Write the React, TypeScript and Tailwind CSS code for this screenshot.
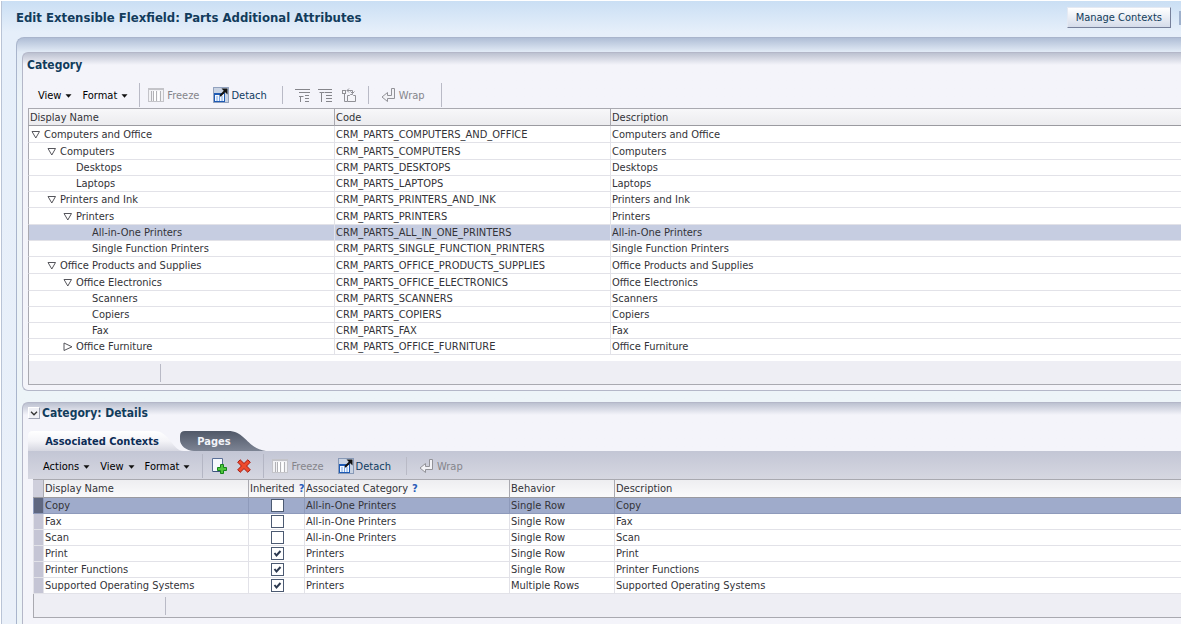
import React from "react";

type TreeRow = {
  name: string;
  code: string;
  level: number;
  state?: "open" | "closed";
  tall?: boolean;
  selected?: boolean;
};

const treeRows: TreeRow[] = [
  { name: "Computers and Office", code: "CRM_PARTS_COMPUTERS_AND_OFFICE", level: 0, state: "open", tall: true },
  { name: "Computers", code: "CRM_PARTS_COMPUTERS", level: 1, state: "open", tall: true },
  { name: "Desktops", code: "CRM_PARTS_DESKTOPS", level: 2 },
  { name: "Laptops", code: "CRM_PARTS_LAPTOPS", level: 2 },
  { name: "Printers and Ink", code: "CRM_PARTS_PRINTERS_AND_INK", level: 1, state: "open" },
  { name: "Printers", code: "CRM_PARTS_PRINTERS", level: 2, state: "open", tall: true },
  { name: "All-in-One Printers", code: "CRM_PARTS_ALL_IN_ONE_PRINTERS", level: 3, selected: true },
  { name: "Single Function Printers", code: "CRM_PARTS_SINGLE_FUNCTION_PRINTERS", level: 3 },
  { name: "Office Products and Supplies", code: "CRM_PARTS_OFFICE_PRODUCTS_SUPPLIES", level: 1, state: "open", tall: true },
  { name: "Office Electronics", code: "CRM_PARTS_OFFICE_ELECTRONICS", level: 2, state: "open", tall: true },
  { name: "Scanners", code: "CRM_PARTS_SCANNERS", level: 3 },
  { name: "Copiers", code: "CRM_PARTS_COPIERS", level: 3 },
  { name: "Fax", code: "CRM_PARTS_FAX", level: 3 },
  { name: "Office Furniture", code: "CRM_PARTS_OFFICE_FURNITURE", level: 2, state: "closed" },
];

const contexts = [
  { name: "Copy", inherited: false, category: "All-in-One Printers", behavior: "Single Row", selected: true },
  { name: "Fax", inherited: false, category: "All-in-One Printers", behavior: "Single Row" },
  { name: "Scan", inherited: false, category: "All-in-One Printers", behavior: "Single Row" },
  { name: "Print", inherited: true, category: "Printers", behavior: "Single Row" },
  { name: "Printer Functions", inherited: true, category: "Printers", behavior: "Single Row" },
  { name: "Supported Operating Systems", inherited: true, category: "Printers", behavior: "Multiple Rows" },
];

const indents = ["pl-[2px]", "pl-[18px]", "pl-[34px]", "pl-[50px]"];

function Caret() {
  return (
    <svg width="7" height="4" viewBox="0 0 7 4" className="mt-0.5">
      <path d="M0.500 0.300h6L3.500 3.800z" fill="#111" />
    </svg>
  );
}

function MenuButton({ label }: { label: string }) {
  return (
    <button type="button" className="flex items-center gap-1 text-black">
      {label}
      <Caret />
    </button>
  );
}

function FreezeIcon() {
  return (
    <svg width="16" height="14" viewBox="0 0 16 14">
      <rect x="0.5" y="0.5" width="15" height="13" fill="#f2f2f5" stroke="#c4c4c9" />
      <path d="M1 1.500h14" stroke="#c4c4c9" />
      <path d="M3.500 3v10M5.500 3v10M8.500 3v10M12.500 3v10" stroke="#b2b2b6" />
      <path d="M7 3v10M10.500 3v10" stroke="#fff" strokeWidth="2" />
    </svg>
  );
}

function DetachIcon() {
  return (
    <svg width="16" height="16" viewBox="0 0 16 16">
      <rect x="0.5" y="0.5" width="15" height="15" fill="#c9d3e3" stroke="#44618e" strokeDasharray="1 1" />
      <rect x="1.500" y="6.500" width="10" height="8" fill="#f3f8ff" stroke="#1d5ab4" />
      <path d="M1 7h8" stroke="#1d5ab4" strokeWidth="2" />
      <path d="M4 9v5M6.500 9v5M9 9v5" stroke="#7aa5e2" />
      <path d="M7 9l5-5" stroke="#111" strokeWidth="2" />
      <path d="M8.500 1.500h6v6z" fill="#111" />
    </svg>
  );
}

function WrapIcon() {
  return (
    <svg width="15" height="15" viewBox="0 0 15 15" fill="#f2f2f6" stroke="#929298">
      <path d="M10.500 0.500h3v10h-7v3L1 9l5.500-4.500v3h4z" />
    </svg>
  );
}

function ExpandBelowIcon() {
  return (
    <svg width="15" height="15" viewBox="0 0 15 15" stroke="#85858b" fill="none">
      <path d="M0 1.500h15M4 4.500h11M10 7.500h4M10 10.500h4M10 13.500h4" />
      <path d="M5.500 14v-5.500h3M4 8.500h4" />
    </svg>
  );
}

function CollapseBelowIcon() {
  return (
    <svg width="15" height="15" viewBox="0 0 15 15" stroke="#85858b" fill="none">
      <path d="M0 1.500h14M3.500 14v-9.500h3M1.500 4.500h2M7 4.500h7M8 7.500h6M8 10.500h6M8 13.500h6" />
    </svg>
  );
}

function ShowAsTopIcon() {
  return (
    <svg width="15" height="15" viewBox="0 0 15 15" stroke="#909096" fill="#f5f5f9">
      <rect x="1.500" y="2.500" width="3" height="3" />
      <path d="M3.500 6v7.500h3" fill="none" />
      <path d="M6.500 7.500h2l1-1h2l1 1h2v6h-8z" />
      <path d="M6 2.500h5.500v3M9.500 3.500l2 2 2-2M8 0.500l-2 2 2 2" fill="none" />
    </svg>
  );
}

function AddIcon() {
  return (
    <svg width="17" height="16" viewBox="0 0 17 16">
      <path d="M1.500 0.500h10v13h-10z" fill="#f5f8fd" stroke="#5a6f97" />
      <path d="M2 13.500h9" stroke="#3d547f" />
      <path d="M9.500 6.500h3v3h3v3h-3v3h-3v-3h-3v-3h3z" fill="#4fc63c" stroke="#15841a" />
    </svg>
  );
}

function DeleteIcon() {
  return (
    <svg width="14" height="14" viewBox="0 0 14 14">
      <path d="M3.200 0.800L7 4.500l3.800-3.700 2.500 2.400L9.600 7l3.700 3.800-2.500 2.500L7 9.600l-3.800 3.700-2.500-2.500L4.400 7 0.700 3.200z" fill="#ee4b2c" stroke="#a8190e" />
    </svg>
  );
}

function Separator() {
  return <span className="h-[18px] w-px bg-[#b9bac6]" />;
}

function ToolButton({ icon, label, disabled }: { icon: React.ReactNode; label: string; disabled?: boolean }) {
  return (
    <button
      type="button"
      disabled={disabled}
      className={disabled ? "flex items-center gap-[3px] text-[#85858b]" : "flex items-center gap-0.5 text-[#0f3b62]"}
    >
      {icon}
      {label}
    </button>
  );
}

function Disclosure({ state, name }: { state?: "open" | "closed"; name: string }) {
  if (!state) return <span className="w-[10px] shrink-0" />;
  return (
    <button type="button" aria-label={`${state === "open" ? "Collapse" : "Expand"} ${name}`} className="w-[10px] shrink-0">
      <svg width="10" height="9" viewBox="0 0 10 9" fill="#fff" stroke="#55555b">
        {state === "open" ? <path d="M1 1.500h7.500L4.800 8z" /> : <path d="M1 1l8 3.800L1 8.500z" />}
      </svg>
    </button>
  );
}

function HelpMark() {
  return (
    <a href="#help" aria-label="Help" className="ml-1 font-bold text-[#2a5cb8]">
      ?
    </a>
  );
}

const headCell = "border-l border-[#a9a9b0] pl-px text-left font-normal whitespace-nowrap overflow-hidden";

function CategoryTable() {
  return (
    <table className="w-full table-fixed border-separate border-spacing-0 bg-white">
      <colgroup>
        <col className="w-[306px]" />
        <col className="w-[276px]" />
        <col />
      </colgroup>
      <thead>
        <tr className="h-[18px] bg-linear-to-b from-[#f8f8fa] to-[#ebebee]">
          {["Display Name", "Code", "Description"].map((h) => (
            <th key={h} className="overflow-hidden border-t border-b border-l border-t-[#a9a9b0] border-b-[#9a9aa0] border-l-[#a9a9b0] p-0 pl-px text-left font-normal">
              {h}
            </th>
          ))}
        </tr>
      </thead>
      <tbody>
        {treeRows.map((r) => (
          <tr key={r.code} className={`${r.tall ? "h-[17px]" : "h-4"} ${r.selected ? "bg-[#c6cde1]" : ""}`}>
            <td className="border-b border-l border-b-[#e2e2e8] border-l-[#a9a9b0] p-0">
              <div className={`flex items-center gap-[3px] ${indents[r.level]}`}>
                <Disclosure state={r.state} name={r.name} />
                <span>{r.name}</span>
              </div>
            </td>
            <td className="border-b border-l border-[#e2e2e8] p-0 pl-px">{r.code}</td>
            <td className="border-b border-l border-[#e2e2e8] p-0 pl-px">{r.name}</td>
          </tr>
        ))}
      </tbody>
    </table>
  );
}

function ContextsTable() {
  return (
    <table className="w-full table-fixed border-separate border-spacing-0 bg-white">
      <colgroup>
        <col className="w-[10px]" />
        <col className="w-[205px]" />
        <col className="w-[56px]" />
        <col className="w-[205px]" />
        <col className="w-[105px]" />
        <col />
      </colgroup>
      <thead>
        <tr className="h-[19px] bg-linear-to-b from-[#ededf0] to-[#fbfbfc] [&>th]:border-t [&>th]:border-b [&>th]:border-t-[#a9a9b0] [&>th]:border-b-[#9a9aa0] [&>th]:p-0 [&>th]:pl-px">
          <th aria-label="Row selector" className="bg-[#cfcfdc]" />
          <th className={headCell}>Display Name</th>
          <th className={headCell}>
            Inherited
            <HelpMark />
          </th>
          <th className={headCell}>
            Associated Category
            <HelpMark />
          </th>
          <th className={headCell}>Behavior</th>
          <th className={headCell}>Description</th>
        </tr>
      </thead>
      <tbody>
        {contexts.map((c) => (
          <tr
            key={c.name}
            className={`h-4 [&>td]:border-b [&>td]:border-l [&>td]:p-0 [&>td]:pl-px ${
              c.selected ? "bg-[#9fabcb] [&>td]:border-[#8e9abb]" : "[&>td]:border-[#e2e2e8]"
            }`}
          >
            <td className={c.selected ? "bg-[#5f6780]" : "bg-[#c5c5d5]"} />
            <td>{c.name}</td>
            <td>
              <span className="relative mx-auto block h-[13px] w-[13px]">
                <input
                  type="checkbox"
                  aria-label={`${c.name} inherited`}
                  defaultChecked={c.inherited}
                  className="peer block h-[13px] w-[13px] appearance-none border border-[#4c5a72] bg-white"
                />
                <svg viewBox="0 0 13 13" className="pointer-events-none absolute inset-0 hidden h-[13px] w-[13px] peer-checked:block">
                  <path d="M3.500 6l2 2.500 4-4.500" fill="none" stroke="#2c3950" strokeWidth="2" />
                </svg>
              </span>
            </td>
            <td>{c.category}</td>
            <td>{c.behavior}</td>
            <td>{c.name}</td>
          </tr>
        ))}
      </tbody>
    </table>
  );
}

export default function App() {
  return (
    <div className="min-h-screen overflow-hidden bg-white py-px pl-px font-['DejaVu_Sans_Condensed','DejaVu_Sans',sans-serif] text-[11px] leading-[15px] text-[#333338] [&_button]:whitespace-nowrap">
      <div className="border-l border-[#b9c4d6] bg-linear-to-b from-[#cadff4] from-0% via-[#e6effa] via-5% to-[#eaf0f9]">
        <header className="flex h-9 items-start justify-between pt-1.5 pl-[14px]">
          <h1 className="text-[13px] leading-[22px] font-bold text-[#123c5c]">
            Edit Extensible Flexfield: Parts Additional Attributes
          </h1>
          <div className="flex items-center gap-2">
            <button type="button" className="h-[21px] border border-[#e4e9f3] border-r-[#76809a] border-b-[#76809a] bg-linear-to-b from-white to-[#d5dcea] px-2 text-[#123c5c]">
              Manage Contexts
            </button>
            <span className="h-[14px] w-0.5 bg-[#9eb0cc]" />
          </div>
        </header>

        <main className="ml-[14px] rounded-tl-lg border-t border-l border-[#a9b5cc] bg-[#ecf3f8] bg-linear-to-b from-[#b0bed6] from-0% via-[#e2ebf6] via-[14px] to-[#edf4f8] to-[60px] pt-3.5 pl-[5px]">
          <section aria-label="Category" className="rounded-l-md border border-r-0 border-[#b4b7c8] bg-[#f4f4fa] bg-linear-to-b from-[#bcc1d0] to-[#f4f4fa] to-[12px] pb-[5px] pl-[5px]">
            <h2 className="mt-1 -ml-px text-[12px] leading-4 font-bold text-[#123c5c]">Category</h2>
            <div className="mt-2.5 mb-px flex h-6 items-center pl-[10px]">
              <div className="flex gap-2.5">
                <MenuButton label="View" />
                <MenuButton label="Format" />
              </div>
              <span className="mr-2 ml-[11px] h-6 w-px bg-[#b9bac6]" />
              <div className="flex gap-3.5">
                <ToolButton icon={<FreezeIcon />} label="Freeze" disabled />
                <ToolButton icon={<DetachIcon />} label="Detach" />
              </div>
              <div className="ml-[15px] flex items-center gap-3">
                <Separator />
                <div className="flex gap-2">
                  <button type="button" disabled aria-label="Expand all below"><ExpandBelowIcon /></button>
                  <button type="button" disabled aria-label="Collapse all below"><CollapseBelowIcon /></button>
                  <button type="button" disabled aria-label="Show as top"><ShowAsTopIcon /></button>
                </div>
                <div className="flex items-center gap-3">
                  <Separator />
                  <ToolButton icon={<WrapIcon />} label="Wrap" disabled />
                </div>
              </div>
              <span className="ml-4 h-6 w-px bg-[#b9bac6]" />
            </div>
            <CategoryTable />
            <div className="border-b border-l border-[#a9a9b0] bg-white pt-1.5">
              <div className="flex h-[23px] items-center bg-[#eeeef4] pl-[131px]">
                <Separator />
              </div>
            </div>
          </section>

          <section aria-label="Category: Details" className="mt-[11px] rounded-tl-md border-t border-l border-[#b4b7c8] bg-[#f4f4fa] bg-linear-to-b from-[#bcc1d0] to-[#f4f4fa] to-[12px] pb-1.5 pl-[5px]">
            <div className="flex items-center gap-0.5 pt-0.5">
              <button type="button" aria-label="Collapse details" className="flex h-3 w-3 items-center justify-center border border-white border-r-[#a0a5b5] border-b-[#a0a5b5] bg-[#f0f1f6]">
                <svg width="8" height="5" viewBox="0 0 8 5" fill="none" stroke="#333" strokeWidth="1.300">
                  <path d="M1 0.800l3 3 3-3" />
                </svg>
              </button>
              <h2 className="text-[12px] leading-4 font-bold text-[#123c5c]">Category: Details</h2>
            </div>
            <div role="tablist" aria-label="Category details" className="mt-2.5 flex h-5">
              <button type="button" role="tab" aria-selected="true" className="relative h-5 w-[152px] pr-1 font-bold text-[#0c2c56]">
                <svg className="absolute top-0 left-0 h-5 w-[156px]" viewBox="0 0 156 20">
                  <defs>
                    <linearGradient id="activeTab" x1="0" y1="0" x2="0" y2="1">
                      <stop offset="0" stopColor="#fff" />
                      <stop offset="0.500" stopColor="#f4f4f8" />
                      <stop offset="1" stopColor="#d6d7e1" />
                    </linearGradient>
                  </defs>
                  <path d="M0 20V5Q0 0 5 0H126C142 0 144 20 156 20z" fill="url(#activeTab)" />
                </svg>
                <span className="relative">Associated Contexts</span>
              </button>
              <button type="button" role="tab" aria-selected="false" className="relative h-5 w-[86px] pr-[18px] font-bold text-[#f2f3f8]">
                <svg className="absolute inset-0 h-5 w-[86px]" viewBox="0 0 86 20">
                  <defs>
                    <linearGradient id="idleTab" x1="0" y1="0" x2="0" y2="1">
                      <stop offset="0" stopColor="#505868" />
                      <stop offset="1" stopColor="#7d8494" />
                    </linearGradient>
                  </defs>
                  <path d="M0 5Q0 0 5 0H48C66 0 66 17 86 20H14C6 20 0 14 0 9z" fill="url(#idleTab)" />
                </svg>
                <span className="relative">Pages</span>
              </button>
            </div>
            <div className="bg-linear-to-b from-[#c3c6d5] to-[#d6d7e1]">
              <div className="flex h-7 items-center pt-0.5 pl-[15px]">
                <div className="flex gap-2.5">
                  <MenuButton label="Actions" />
                  <MenuButton label="View" />
                  <MenuButton label="Format" />
                </div>
                <span className="mr-2 ml-3 h-6 w-px bg-[#b4b6c4]" />
                <div className="flex items-center gap-[9px]">
                  <button type="button" aria-label="Add"><AddIcon /></button>
                  <button type="button" aria-label="Delete"><DeleteIcon /></button>
                </div>
                <span className="mr-2 ml-3 h-6 w-px bg-[#b4b6c4]" />
                <div className="flex gap-3.5">
                  <ToolButton icon={<FreezeIcon />} label="Freeze" disabled />
                  <ToolButton icon={<DetachIcon />} label="Detach" />
                </div>
                <div className="ml-[15px] flex items-center gap-3">
                  <Separator />
                  <ToolButton icon={<WrapIcon />} label="Wrap" disabled />
                </div>
              </div>
            </div>
            <div className="pl-[5px]">
              <ContextsTable />
              <div className="flex h-6 items-center border-b border-l border-[#a9a9b0] bg-[#eeeef4] pl-[131px]">
                <Separator />
              </div>
            </div>
          </section>
        </main>
      </div>
    </div>
  );
}
